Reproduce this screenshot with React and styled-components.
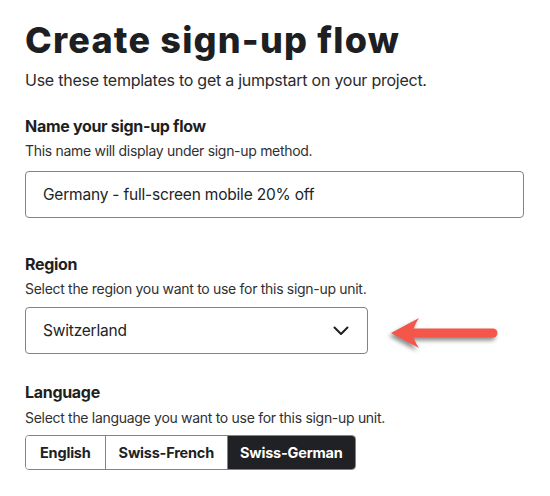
import styled, { createGlobalStyle } from "styled-components";

const GlobalStyle = createGlobalStyle`
  * {
    box-sizing: border-box;
  }
  body {
    margin: 0;
    background: #ffffff;
    color: #222326;
    font-family: Inter, "Noto Sans", sans-serif;
  }
`;

const Page = styled.main`
  padding: 18px 25px 24px;
  width: 550px;
`;

const Title = styled.h1`
  margin: 0;
  font-size: 36px;
  line-height: 44px;
  font-weight: 800;
  letter-spacing: 1.2px;
  color: #1e1f22;
`;

const Subtitle = styled.p`
  margin: 6px 0 0;
  font-size: 16px;
  line-height: 24px;
  letter-spacing: -0.25px;
  color: #2a2b2e;
`;

const Field = styled.section`
  margin-top: ${(p) => p.$gap}px;
  display: flex;
  flex-direction: column;
`;

const Label = styled.h2`
  margin: 0;
  font-size: 16px;
  line-height: 22px;
  font-weight: 700;
  letter-spacing: -0.3px;
  color: #1e1f22;
`;

const Help = styled.p`
  margin: ${(p) => p.$top ?? 4}px 0 0;
  font-size: 14px;
  line-height: 20px;
  letter-spacing: -0.3px;
  color: #2f3033;
`;

const TextInput = styled.input`
  margin-top: 10px;
  width: 499px;
  height: 47px;
  padding: 0 17px;
  border: 1px solid #828384;
  border-radius: 4px;
  font-family: inherit;
  font-size: 15.5px;
  letter-spacing: -0.2px;
  color: #222326;
  background: #ffffff;
  outline: none;
`;

const SelectRow = styled.div`
  margin-top: 8px;
  display: flex;
  align-items: center;
`;

const Select = styled.button`
  width: 343px;
  height: 47px;
  padding: 0 18px 0 17px;
  display: flex;
  align-items: center;
  justify-content: space-between;
  border: 1px solid #828384;
  border-radius: 4px;
  background: #ffffff;
  font-family: inherit;
  font-size: 15.5px;
  letter-spacing: -0.2px;
  color: #222326;
  text-align: left;
`;

const Pointer = styled.svg`
  margin-left: 21px;
  margin-top: 4px;
  filter: drop-shadow(-2px 3px 2px rgba(0, 0, 0, 0.45));
`;

const Segments = styled.div`
  margin-top: 7px;
  display: inline-flex;
  align-self: flex-start;
  height: 35px;
  border: 1px solid #828384;
  border-radius: 4px;
  overflow: hidden;
`;

const Segment = styled.button`
  height: 100%;
  padding: 0 ${(p) => p.$pad}px;
  border: none;
  border-left: ${(p) => (p.$first ? "none" : "1px solid #828384")};
  background: ${(p) => (p.$active ? "#202124" : "#ffffff")};
  color: ${(p) => (p.$active ? "#ffffff" : "#202124")};
  font-family: inherit;
  font-size: 14.5px;
  font-weight: 700;
  letter-spacing: -0.2px;
`;

function Chevron() {
  return (
    <svg width="16" height="10" viewBox="0 0 16 10" fill="none">
      <path
        d="M1.5 1.5 L8 8 L14.5 1.5"
        stroke="#1e1f22"
        strokeWidth="2"
        strokeLinecap="round"
        strokeLinejoin="round"
      />
    </svg>
  );
}

function RedArrow() {
  return (
    <Pointer width="112" height="36" viewBox="0 0 112 36">
      <path d="M26 18 L104 18" stroke="#f4564a" strokeWidth="9" strokeLinecap="round" />
      <path d="M2 18 L30 3 Q24 12 24 18 Q24 24 30 33 Z" fill="#f4564a" />
    </Pointer>
  );
}

const languages = [
  { name: "English", pad: 14 },
  { name: "Swiss-French", pad: 13 },
  { name: "Swiss-German", pad: 12 },
];

export default function App() {
  return (
    <Page>
      <GlobalStyle />
      <Title>Create sign-up flow</Title>
      <Subtitle>Use these templates to get a jumpstart on your project.</Subtitle>

      <Field $gap={23}>
        <Label>Name your sign-up flow</Label>
        <Help>This name will display under sign-up method.</Help>
        <TextInput defaultValue="Germany - full-screen mobile 20% off" />
      </Field>

      <Field $gap={35}>
        <Label>Region</Label>
        <Help>Select the region you want to use for this sign-up unit.</Help>
        <SelectRow>
          <Select>
            Switzerland
            <Chevron />
          </Select>
          <RedArrow />
        </SelectRow>
      </Field>

      <Field $gap={27}>
        <Label>Language</Label>
        <Help $top={5}>Select the language you want to use for this sign-up unit.</Help>
        <Segments>
          {languages.map((l, i) => (
            <Segment
              key={l.name}
              $pad={l.pad}
              $first={i === 0}
              $active={l.name === "Swiss-German"}
            >
              {l.name}
            </Segment>
          ))}
        </Segments>
      </Field>
    </Page>
  );
}
